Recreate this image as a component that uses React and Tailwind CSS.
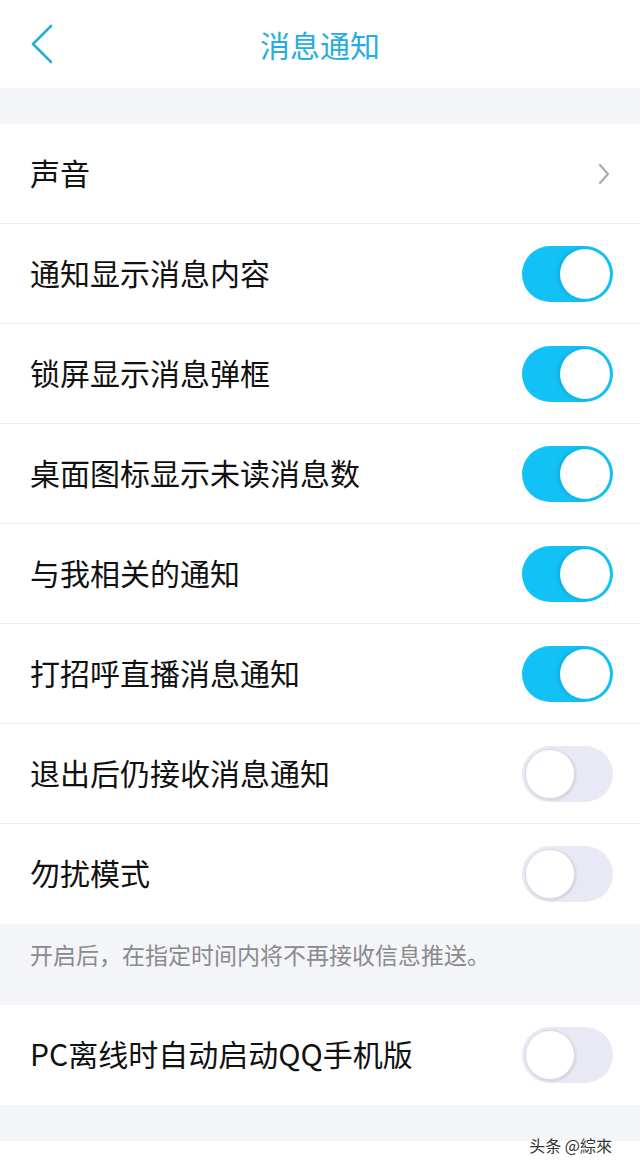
export default function App() {
  const font = { fontFamily: '"Noto Sans CJK SC", "Noto Sans", sans-serif' };
  const rows = [
    ["通知显示消息内容", true],
    ["锁屏显示消息弹框", true],
    ["桌面图标显示未读消息数", true],
    ["与我相关的通知", true],
    ["打招呼直播消息通知", true],
    ["退出后仍接收消息通知", false],
    ["勿扰模式", false],
  ];
  const Toggle = ({ on }) =>
    on ? (
      <div className="w-[91px] h-[56px] rounded-full bg-[#12c2f6] flex items-center justify-end pr-[3px]">
        <div className="w-[50px] h-[50px] rounded-full bg-white shadow-[-2px_0_4px_rgba(0,0,0,0.12)]" />
      </div>
    ) : (
      <div className="w-[91px] h-[56px] rounded-full bg-[#e8e9f4] flex items-center pl-[3px]">
        <div className="w-[50px] h-[50px] rounded-full bg-white border border-[#dadbe3] shadow-[1px_1px_3px_rgba(0,0,0,0.12)]" />
      </div>
    );
  const Row = ({ label, children, border = true }) => (
    <div className={`h-[100px] flex items-center justify-between pl-[30px] pr-[27px] bg-white ${border ? "border-b border-[#ededf0]" : ""}`}>
      <span className="text-[30px] text-[#111] leading-none -mt-[4px]">{label}</span>
      {children}
    </div>
  );
  return (
    <div className="w-[640px] h-[1168px] bg-white overflow-hidden" style={font}>
      <div className="h-[88px] relative flex items-center justify-center">
        <svg className="absolute left-[28px] top-[24px]" width="28" height="40" viewBox="0 0 28 40">
          <path d="M23 2 L5 20 L23 38" fill="none" stroke="#2aabde" strokeWidth="2.6" strokeLinecap="round" strokeLinejoin="round" />
        </svg>
        <span className="text-[30px] text-[#27aee0] leading-none">消息通知</span>
      </div>
      <div className="h-[36px] bg-[#f4f5f8]" />
      <Row label="声音">
        <svg width="14" height="22" viewBox="0 0 14 22" className="mr-[2px]">
          <path d="M3 2 L11 11 L3 20" fill="none" stroke="#ababab" strokeWidth="2.2" strokeLinecap="round" strokeLinejoin="round" />
        </svg>
      </Row>
      {rows.map(([l, on], i) => (
        <Row key={l} label={l} border={i !== rows.length - 1}>
          <Toggle on={on} />
        </Row>
      ))}
      <div className="h-[81px] bg-[#f4f5f8] flex items-start pl-[30px] pt-[15px]">
        <span className="text-[23px] text-[#8a8a8e] leading-[30px]">开启后，在指定时间内将不再接收信息推送。</span>
      </div>
      <Row label="PC离线时自动启动QQ手机版" border={false}>
        <Toggle on={false} />
      </Row>
      <div className="h-[36px] bg-[#f4f5f8]" />
      <div className="flex justify-end pr-[28px] -mt-[4px]">
        <span className="text-[16px] text-[#333] leading-none">头条 @綜來</span>
      </div>
    </div>
  );
}
